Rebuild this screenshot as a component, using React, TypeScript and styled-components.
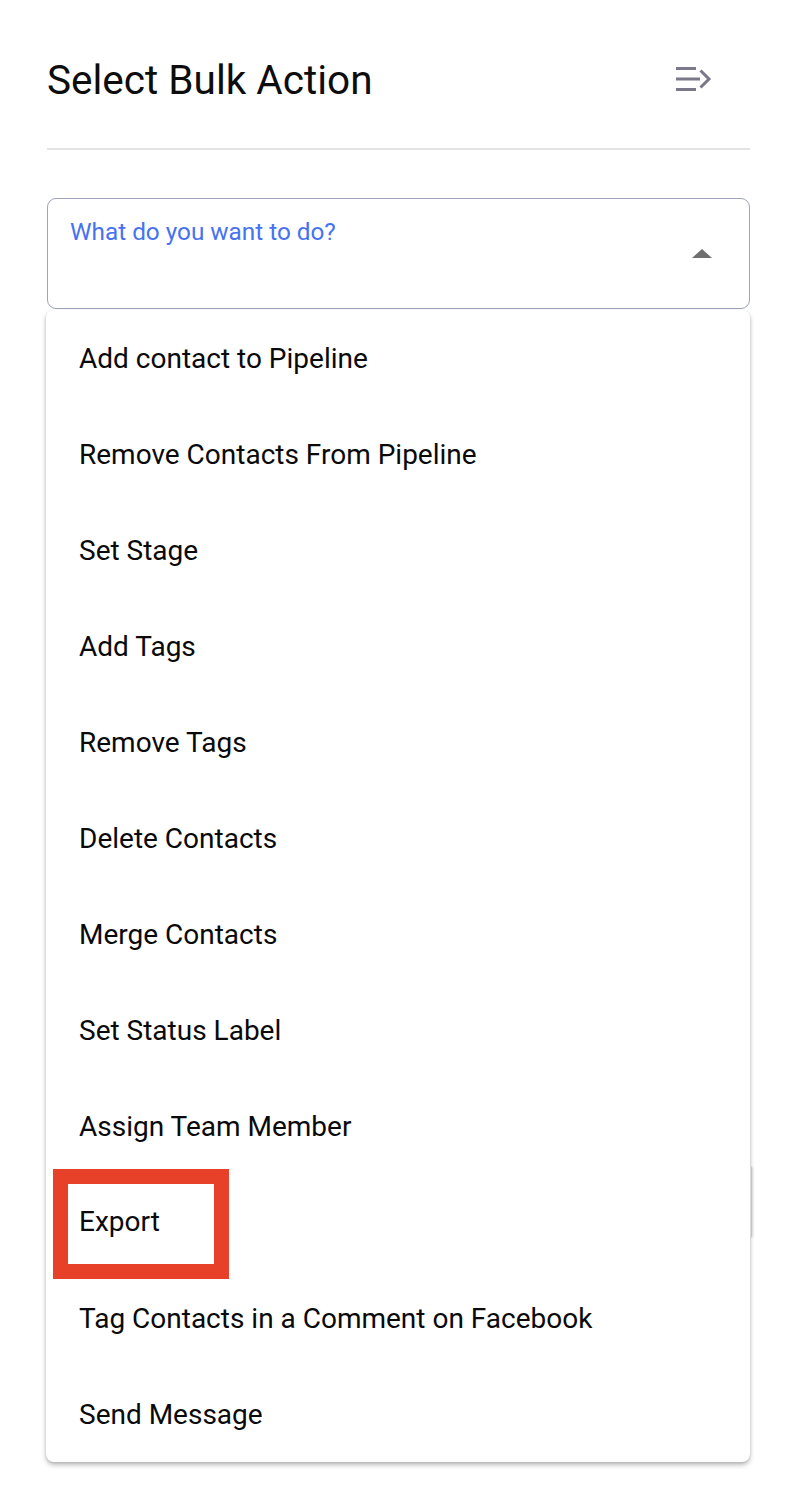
import styled, { createGlobalStyle } from "styled-components";

const GlobalStyle = createGlobalStyle`
  html, body {
    margin: 0;
    padding: 0;
    background: #ffffff;
    font-family: Roboto, "Liberation Sans", Arial, sans-serif;
  }
`;

const actions = [
    "Add contact to Pipeline",
    "Remove Contacts From Pipeline",
    "Set Stage",
    "Add Tags",
    "Remove Tags",
    "Delete Contacts",
    "Merge Contacts",
    "Set Status Label",
    "Assign Team Member",
    "Export",
    "Tag Contacts in a Comment on Facebook",
    "Send Message",
];

const CloseIcon = () => (
    <svg width="40" height="30" viewBox="0 0 40 30" fill="none">
        <rect x="2" y="3" width="20" height="3" fill="#7b7989" />
        <rect x="2" y="13.5" width="24" height="3" fill="#7b7989" />
        <rect x="2" y="24" width="20" height="3" fill="#7b7989" />
        <path d="M26.5 6.5 L35 15 L26.5 23.5" stroke="#7b7989" strokeWidth="3" />
    </svg>
);

const App = () => {
    return (
        <>
            <GlobalStyle />
            <Page>
                <Header>
                    <Title>Select Bulk Action</Title>
                    <IconButton>
                        <CloseIcon />
                    </IconButton>
                </Header>
                <Divider />
                <Field>
                    <SelectBox>
                        <Placeholder>What do you want to do?</Placeholder>
                        <Caret />
                    </SelectBox>
                    <Menu>
                        {actions.map(a => (
                            <MenuItem key={a} $marked={a === "Export"}>
                                <ItemLabel $marked={a === "Export"}>{a}</ItemLabel>
                            </MenuItem>
                        ))}
                    </Menu>
                    <Behind />
                </Field>
            </Page>
        </>
    );
};

const Page = styled.div`
  width: 796px;
  min-height: 1508px;
  box-sizing: border-box;
  padding: 0 46px 0 47px;
`;

const Header = styled.div`
  display: flex;
  align-items: center;
  justify-content: space-between;
  height: 148px;
  box-sizing: border-box;
  padding-top: 12px;
`;

const Title = styled.h1`
  margin: 0;
  font-size: 40.5px;
  font-weight: 400;
  color: #0d0d0d;
`;

const IconButton = styled.div`
  display: flex;
  margin-right: 36px;
  margin-top: -2px;
`;

const Divider = styled.div`
  height: 2px;
  background: #e3e3e3;
`;

const Field = styled.div`
  position: relative;
  margin-top: 48px;
`;

const SelectBox = styled.div`
  position: relative;
  height: 111px;
  box-sizing: border-box;
  border: 1px solid #9ea2bd;
  border-radius: 9px;
  padding: 18px 22px;
`;

const Placeholder = styled.div`
  font-size: 24.3px;
  color: #4672f2;
`;

const Caret = styled.div`
  position: absolute;
  right: 37px;
  top: 50px;
  width: 0;
  height: 0;
  border-left: 10px solid transparent;
  border-right: 10px solid transparent;
  border-bottom: 9px solid #6f6f6f;
`;

const Menu = styled.div`
  position: absolute;
  z-index: 2;
  top: 112px;
  left: -1px;
  right: 0;
  background: #ffffff;
  border-radius: 8px;
  box-shadow: 0 3px 5px rgba(0, 0, 0, 0.25), 0 1px 3px rgba(0, 0, 0, 0.1);
  display: flex;
  flex-direction: column;
`;

const MenuItem = styled.div<{ $marked?: boolean }>`
  height: 96px;
  display: flex;
  align-items: center;
  padding-left: ${p => (p.$marked ? "7px" : "33px")};
`;

const ItemLabel = styled.span<{ $marked?: boolean }>`
  font-size: 28px;
  color: #0a0a0a;
  ${p =>
      p.$marked &&
      `
    display: block;
    border: 15px solid #e8412a;
    width: 146px;
    height: 80px;
    margin-top: 4px;
    box-sizing: content-box;
    padding: 0;
    line-height: 76px;
    text-indent: 11px;
  `}
`;

const Behind = styled.div`
  margin-top: 858px;
  height: 70px;
  margin-right: -2px;
  border-right: 1px solid #d6d6d6;
  box-shadow: 1px 0 2px rgba(0, 0, 0, 0.12);
`;

export default App;
